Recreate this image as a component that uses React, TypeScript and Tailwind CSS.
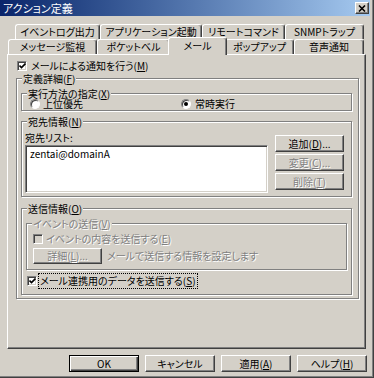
import React from "react";

const raised =
  "border border-t-white border-l-white border-r-[#404040] border-b-[#404040] shadow-[inset_-1px_-1px_0_#808080]";
const sunken =
  "border border-t-[#808080] border-l-[#808080] border-r-white border-b-white shadow-[inset_1px_1px_0_#404040,inset_-1px_-1px_0_#d4d0c8]";
const grayText = "text-[#808080] [text-shadow:1px_1px_0_#fff]";

const U = ({ c }: { c: string }) => <span className="underline underline-offset-[1px]">{c}</span>;

const Check = ({ on, disabled }: { on?: boolean; disabled?: boolean }) => (
  <span
    className={`w-[10px] h-[10px] shrink-0 flex items-center justify-center ${sunken} ${
      disabled ? "bg-[#d4d0c8]" : "bg-white"
    }`}
  >
    {on && (
      <svg width="7" height="6" viewBox="0 0 7 6">
        <path d="M0.5 2.5 L2.5 4.5 L6.5 0.5" stroke="#000" strokeWidth="1.6" fill="none" />
      </svg>
    )}
  </span>
);

const Radio = ({ on }: { on?: boolean }) => (
  <span className="w-[10px] h-[10px] shrink-0 rounded-full bg-white border border-t-[#808080] border-l-[#808080] border-r-white border-b-white shadow-[inset_1px_1px_0_#404040] flex items-center justify-center">
    {on && <span className="w-[4px] h-[4px] rounded-full bg-black" />}
  </span>
);

const Group = ({
  label,
  className,
  disabled,
  children,
}: {
  label: React.ReactNode;
  className: string;
  disabled?: boolean;
  children?: React.ReactNode;
}) => (
  <div className={`border border-[#808080] shadow-[inset_1px_1px_0_#fff,1px_1px_0_#fff] ${className}`}>
    <div
      className={`-mt-[6px] ml-[5px] px-[1px] w-fit h-[11px] leading-[11px] bg-[#d4d0c8] ${
        disabled ? grayText : ""
      }`}
    >
      {label}
    </div>
    {children}
  </div>
);

const Btn = ({
  children,
  className,
  disabled,
}: {
  children: React.ReactNode;
  className: string;
  disabled?: boolean;
}) => (
  <div
    className={`flex items-center justify-center leading-none ${raised} ${disabled ? grayText : ""} ${className}`}
  >
    {children}
  </div>
);

const Tab = ({ label, className, active }: { label: string; className: string; active?: boolean }) => (
  <div
    className={`flex items-center justify-center rounded-t-[3px] border-t border-l border-r border-t-white border-l-white border-r-[#404040] shadow-[inset_-1px_0_0_#808080] bg-[#d4d0c8] leading-none ${
      active ? "h-[18px] -mx-[2px] -mb-[1px] relative z-10 pb-[2px]" : "h-[15px]"
    } ${className}`}
  >
    {label}
  </div>
);

export default function App() {
  return (
    <div className="w-[374px] h-[378px] bg-[#d4d0c8] text-[10px] text-black font-['Noto_Sans_CJK_JP','Noto_Sans',sans-serif] [font-feature-settings:'palt'] border-r border-b border-r-[#404040] border-b-[#404040] shadow-[inset_-1px_-1px_0_#808080] flex flex-col overflow-hidden">
      {/* title bar */}
      <div className="w-[370px] h-[16px] bg-gradient-to-r from-[#0a246a] to-[#a6caf0] flex items-center justify-between pl-[3px] pr-[1px]">
        <span className="text-white text-[11px] leading-none">アクション定義</span>
        <div className={`w-[14px] h-[12px] bg-[#d4d0c8] flex items-center justify-center ${raised}`}>
          <svg width="8" height="7" viewBox="0 0 8 7">
            <path d="M1 0.5 L7 6.5 M7 0.5 L1 6.5" stroke="#000" strokeWidth="1.6" />
          </svg>
        </div>
      </div>

      {/* tabs */}
      <div className="mt-[8px] ml-[7px] w-[359px]">
        <div className="flex pl-[8px]">
          <Tab label="イベントログ出力" className="w-[85px]" />
          <Tab label="アプリケーション起動" className="w-[102px]" />
          <Tab label="リモートコマンド" className="w-[83px]" />
          <Tab label="SNMPトラップ" className="w-[79px]" />
        </div>
        <div className="flex items-end h-[15px] pl-[1px]">
          <Tab label="メッセージ監視" className="w-[89px]" />
          <Tab label="ポケットベル" className="w-[73px]" />
          <Tab label="メール" className="w-[59px]" active />
          <Tab label="ポップアップ" className="w-[69px]" />
          <Tab label="音声通知" className="w-[70px]" />
        </div>

        {/* panel */}
        <div className="h-[295px] border border-t-white border-l-white border-r-[#404040] border-b-[#404040] shadow-[inset_-1px_-1px_0_#808080] flex flex-col">
          <div className="mt-[6px] ml-[9px] h-[10px] flex items-center gap-[4px] leading-none">
            <Check on />
            <span>
              メールによる通知を行う(<U c="M" />)
            </span>
          </div>

          <Group
            label={
              <>
                定義詳細(<U c="F" />)
              </>
            }
            className="mt-[7px] ml-[8px] w-[343px] h-[221px] flex flex-col"
          >
            <Group
              label={
                <>
                  実行方法の指定(<U c="X" />)
                </>
              }
              className="mt-[9px] ml-[4px] w-[331px] h-[18px]"
            >
              <div className="flex items-center h-[10px] pl-[8px] leading-none">
                <div className="w-[151px] flex items-center gap-[3px]">
                  <Radio />
                  <span>上位優先</span>
                </div>
                <div className="flex items-center gap-[4px]">
                  <Radio on />
                  <span>常時実行</span>
                </div>
              </div>
            </Group>

            <Group
              label={
                <>
                  宛先情報(<U c="N" />)
                </>
              }
              className="mt-[10px] ml-[4px] w-[331px] h-[76px]"
            >
              <div className="flex pl-[3px]">
                <div className="flex flex-col">
                  <div className="mt-[5px] h-[11px] leading-[11px]">宛先リスト:</div>
                  <div className={`mt-[2px] w-[243px] h-[48px] bg-white pl-[4px] pt-[2px] leading-[11px] ${sunken}`}>
                    zentai@domainA
                  </div>
                </div>
                <div className="ml-[7px] mt-[8px] flex flex-col gap-[2px]">
                  <Btn className="w-[69px] h-[17px]">
                    追加(<U c="D" />)...
                  </Btn>
                  <Btn className="w-[69px] h-[17px]" disabled>
                    変更(<U c="C" />)...
                  </Btn>
                  <Btn className="w-[69px] h-[17px]" disabled>
                    削除(<U c="T" />)
                  </Btn>
                </div>
              </div>
            </Group>

            <Group
              label={
                <>
                  送信情報(<U c="O" />)
                </>
              }
              className="mt-[11px] ml-[4px] w-[331px] h-[87px] flex flex-col"
            >
              <Group
                label={
                  <>
                    イベントの送信(<U c="V" />)
                  </>
                }
                disabled
                className="mt-[9px] ml-[4px] w-[321px] h-[47px] flex flex-col"
              >
                <div className={`mt-[5px] ml-[6px] h-[10px] flex items-center gap-[3px] leading-none ${grayText}`}>
                  <Check disabled />
                  <span>
                    イベントの内容を送信する(<U c="E" />)
                  </span>
                </div>
                <div className="mt-[4px] ml-[6px] flex items-center gap-[5px]">
                  <Btn className="w-[69px] h-[16px]" disabled>
                    詳細(<U c="L" />)...
                  </Btn>
                  <span className={`leading-none ${grayText}`}>メールで送信する情報を設定します</span>
                </div>
              </Group>
              <div className="mt-[3px] ml-[5px] h-[16px] flex items-center gap-[1px] leading-none">
                <Check on />
                <span className="border border-dotted border-black px-[1px] h-[16px] flex items-center">
                  メール連携用のデータを送信する(<U c="S" />)
                </span>
              </div>
            </Group>
          </Group>
        </div>
      </div>

      {/* bottom buttons */}
      <div className="mt-[6px] ml-[69px] flex gap-[6px]">
        <Btn className="w-[70px] h-[17px] !border-black shadow-[inset_1px_1px_0_#fff,inset_-1px_-1px_0_#404040,inset_-2px_-2px_0_#808080]">
          OK
        </Btn>
        <Btn className="w-[70px] h-[17px]">キャンセル</Btn>
        <Btn className="w-[70px] h-[17px]">
          適用(<U c="A" />)
        </Btn>
        <Btn className="w-[70px] h-[17px]">
          ヘルプ(<U c="H" />)
        </Btn>
      </div>
    </div>
  );
}
